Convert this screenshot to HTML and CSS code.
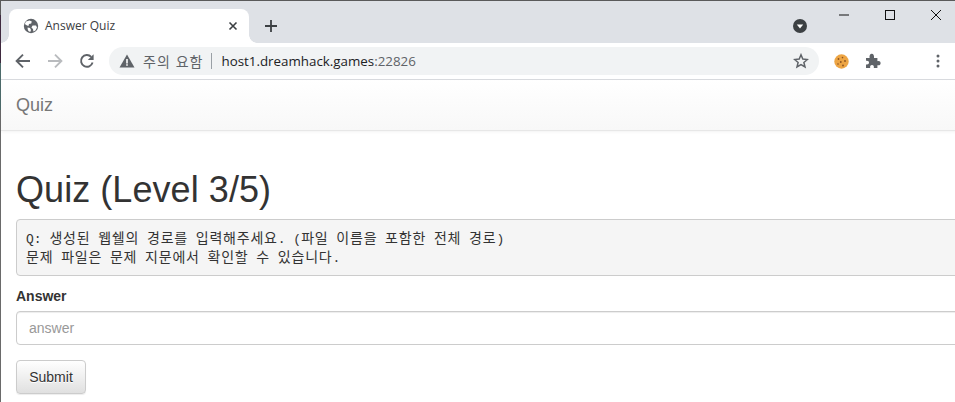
FILE: index.html
```html
<!DOCTYPE html>
<html lang="ko">
<head>
<meta charset="utf-8">
<title>Answer Quiz</title>
<link rel="stylesheet" href="styles.css">
</head>
<body>
<div class="edge"></div>
<div class="window">
  <header class="tabstrip">
    <div class="tab">
      <svg class="favicon" width="16" height="16" viewBox="0 0 16 16"><circle cx="8" cy="8" r="7.2" fill="#5f6368"/><path d="M3 3.6 6.6 2.6 8.8 3.6 8.2 5.6 6 6 5.4 8 3.6 7.2 1.8 6ZM9.6 7.4 13 7.6 14 9.6 12.4 12.6 10.4 13.6 10 11 8.4 9.4Z" fill="#fff"/><path d="M4.6 9.4 7 10 8 12 7.2 14 5.4 13 4.6 11Z" fill="#fff"/></svg>
      <span class="tab-title">Answer Quiz</span>
      <svg class="tab-close" width="10" height="10" viewBox="0 0 10 10"><path d="M1.5 1.5 8.5 8.5M8.5 1.5 1.5 8.5" stroke="#3c4043" stroke-width="1.6"/></svg>
    </div>
    <svg class="newtab" width="14" height="14" viewBox="0 0 14 14"><path d="M7 1V13M1 7H13" stroke="#3c4043" stroke-width="1.8"/></svg>
    <div class="strip-space"></div>
    <svg class="profile" width="14" height="14" viewBox="0 0 14 14"><circle cx="7" cy="7" r="7" fill="#3c4043"/><path d="M3.8 5.4H10.2L7 9.4Z" fill="#fff"/></svg>
    <div class="winctl">
      <svg width="46" height="30" viewBox="0 0 46 30"><path d="M18 15H28" stroke="#111" stroke-width="1"/></svg>
      <svg width="46" height="30" viewBox="0 0 46 30"><rect x="18.5" y="10.5" width="9" height="9" fill="none" stroke="#111"/></svg>
      <svg width="46" height="30" viewBox="0 0 46 30"><path d="M18 10 28 20M28 10 18 20" stroke="#111" stroke-width="1"/></svg>
    </div>
  </header>
  <nav class="toolbar">
    <svg class="nav-ico" width="16" height="16" viewBox="0 0 16 16"><path d="M15 8H2M8 1.6 1.6 8 8 14.4" fill="none" stroke="#5f6368" stroke-width="1.9"/></svg>
    <svg class="nav-ico" width="16" height="16" viewBox="0 0 16 16"><path d="M1 8H14M8 1.6 14.4 8 8 14.4" fill="none" stroke="#b9bbbe" stroke-width="1.9"/></svg>
    <svg class="nav-ico" width="16" height="16" viewBox="0 0 16 16"><path d="M13.6 9.6A5.9 5.9 0 1 1 12.2 3.8" fill="none" stroke="#5f6368" stroke-width="1.9"/><path d="M14.6 1.2V7H8.8Z" fill="#5f6368"/></svg>
    <div class="omnibox">
      <svg class="warn" width="16" height="14" viewBox="0 0 16 14"><path d="M8 0.5 15.5 13.5H.5Z" fill="#5f6368"/><path d="M7.2 5H8.8V9.4H7.2ZM7.2 10.2H8.8V11.8H7.2Z" fill="#fff"/></svg>
      <span class="warn-text">주의 요함</span>
      <span class="omni-sep"></span>
      <span class="url">host1.dreamhack.games<span class="port">:22826</span></span>
      <span class="omni-space"></span>
      <svg class="star" width="16" height="16" viewBox="0 0 16 16"><path d="M8 1.8 9.8 6.1 14.4 6.5 10.9 9.5 12 14 8 11.6 4 14 5.1 9.5 1.6 6.5 6.2 6.1Z" fill="none" stroke="#5f6368" stroke-width="1.5"/></svg>
    </div>
    <svg class="cookie" width="15" height="15" viewBox="0 0 15 15"><circle cx="7.5" cy="7.5" r="7.2" fill="#eda544"/><circle cx="4.5" cy="5" r=".9" fill="#8a5220"/><circle cx="8.5" cy="3.6" r=".8" fill="#8a5220"/><circle cx="11" cy="7" r=".9" fill="#8a5220"/><circle cx="6.8" cy="8" r=".9" fill="#8a5220"/><circle cx="4" cy="10" r=".8" fill="#8a5220"/><circle cx="9" cy="11.5" r=".9" fill="#8a5220"/></svg>
    <svg class="puzzle" width="16" height="16" viewBox="0 0 16 16"><path d="M1 5H4.6C4.2 2.6 5 .8 6.8.8S9.2 2.6 9 5H12.4V8.2C14.6 7.8 15.6 8.8 15.6 10.2S14.6 12.6 12.4 12.2V15H8.8C9.2 13 8.4 12 7 12S4.8 13 5.2 15H1V11.4C3 11.8 4 11 4 9.6S3 7.4 1 7.8Z" fill="#5f6368"/></svg>
    <svg class="dots" width="4" height="14" viewBox="0 0 4 14"><circle cx="2" cy="2" r="1.5" fill="#5f6368"/><circle cx="2" cy="7" r="1.5" fill="#5f6368"/><circle cx="2" cy="12" r="1.5" fill="#5f6368"/></svg>
  </nav>
  <div class="navbar"><a class="brand">Quiz</a></div>
  <main class="content">
    <h1 class="title">Quiz (Level 3/5)</h1>
    <pre class="question">Q: <span class="ko">생성된</span> <span class="ko">웹쉘의</span> <span class="ko">경로를</span> <span class="ko">입력해주세요</span>. (<span class="ko">파일</span> <span class="ko">이름을</span> <span class="ko">포함한</span> <span class="ko">전체</span> <span class="ko">경로</span>)
<span class="ko">문제</span> <span class="ko">파일은</span> <span class="ko">문제</span> <span class="ko">지문에서</span> <span class="ko">확인할</span> <span class="ko">수</span> <span class="ko">있습니다</span>.</pre>
    <label class="field-label" for="answer">Answer</label>
    <input class="field" id="answer" placeholder="answer">
    <button class="submit" type="button">Submit</button>
  </main>
</div>
</body>
</html>
```

FILE: styles.css
```css
* { box-sizing: border-box; }
html, body { margin: 0; height: 402px; overflow: hidden; }
body { display: flex; background: #fff; font-family: "Liberation Sans", Arial, sans-serif; color: #333; }
.edge { width: 1px; flex: none; background: linear-gradient(#5a5a5a 0, #5a5a5a 15px, #3f2a3f 15px, #3f2a3f 63px, #4d6b6b 63px, #4d6b6b 110px, #6a6a6a 110px); }
.window { width: 1100px; flex: none; }
.tabstrip { height: 43px; background: #dee1e6; border-top: 1px solid #5a5a5a; display: flex; align-items: flex-start; width: 954px; }
.tab { position: relative; margin: 8px 0 0 8px; width: 240px; height: 34px; background: #fff; border-radius: 8px 8px 0 0; display: flex; align-items: center; padding: 0 11px 0 14px; }
.tab::before, .tab::after { content: ""; position: absolute; bottom: 0; width: 8px; height: 8px; background: radial-gradient(circle at var(--c), #dee1e6 7.5px, #fff 8px); }
.tab::before { left: -8px; --c: 0 0; }
.tab::after { right: -8px; --c: 100% 0; }
.favicon { flex: none; }
.tab-title { margin-left: 6px; flex: 1; font: 12px/16px "Open Sans", sans-serif; color: #3c4043; }
.tab-close { flex: none; }
.newtab { margin: 18px 0 0 15px; flex: none; }
.strip-space { flex: 1; }
.profile { margin: 18px 14px 0 0; flex: none; }
.winctl { display: flex; margin-right: -4px; }
.winctl svg { display: block; margin-top: -1px; }
.toolbar { height: 37px; width: 954px; background: #fff; border-bottom: 1px solid #dadce0; display: flex; align-items: center; }
.nav-ico { flex: none; margin-left: 16px; }
.nav-ico:first-child { margin-left: 14px; }
.omnibox { margin-left: 14px; width: 710px; height: 28px; border-radius: 14px; background: #f1f3f4; display: flex; align-items: center; padding: 0 10px; flex: none; }
.warn { flex: none; }
.warn-text { margin-left: 8px; font: 14px/20px "Noto Sans CJK KR", sans-serif; color: #5f6368; letter-spacing: 1px; }
.omni-sep { width: 1px; height: 16px; background: #9aa0a6; margin: 0 9px 0 8px; }
.url { font: 13.35px/20px "Open Sans", sans-serif; color: #202124; }
.port { color: #5f6368; }
.omni-space { flex: 1; }
.star { flex: none; }
.cookie { margin-left: 15px; flex: none; }
.puzzle { margin-left: 16px; flex: none; }
.dots { margin-left: 55px; flex: none; }
.navbar { height: 51px; background: linear-gradient(#fff, #f8f8f8); border-bottom: 1px solid #e7e7e7; box-shadow: 0 1px 3px rgba(0,0,0,.05); padding: 15px; }
.brand { font-size: 18px; line-height: 20px; color: #777; display: block; }
.content { padding: 0 15px; }
.title { font-size: 36px; font-weight: 500; line-height: 40px; letter-spacing: .06px; margin: 39px 0 9px; color: #333; }
.question { margin: 0 0 10px; padding: 10px 9px 9px; height: 57px; border: 1px solid #ccc; border-radius: 4px; background: #f5f5f5; font: 13px/17.6px "Liberation Mono", monospace; color: #333; }
.ko { display: inline-block; font-family: "Noto Sans CJK KR", sans-serif; font-size: 14px; letter-spacing: .78px; line-height: 14px; }
.field-label { display: block; font-size: 14px; font-weight: 700; line-height: 20px; margin-bottom: 5px; }
.field { display: block; width: 100%; height: 34px; padding: 6px 12px; font: 14px/20px "Liberation Sans", sans-serif; border: 1px solid #ccc; border-radius: 4px; color: #555; box-shadow: inset 0 1px 1px rgba(0,0,0,.075); margin-bottom: 15px; }
.field::placeholder { color: #999; opacity: 1; }
.submit { display: block; width: 70px; height: 34px; padding: 6px 12px; font: 14px/20px "Liberation Sans", sans-serif; color: #333; border: 1px solid #ccc; border-radius: 4px; background: linear-gradient(#fff, #e0e0e0); text-shadow: 0 1px 0 #fff; box-shadow: inset 0 1px 0 rgba(255,255,255,.15), 0 1px 1px rgba(0,0,0,.075); }
```
